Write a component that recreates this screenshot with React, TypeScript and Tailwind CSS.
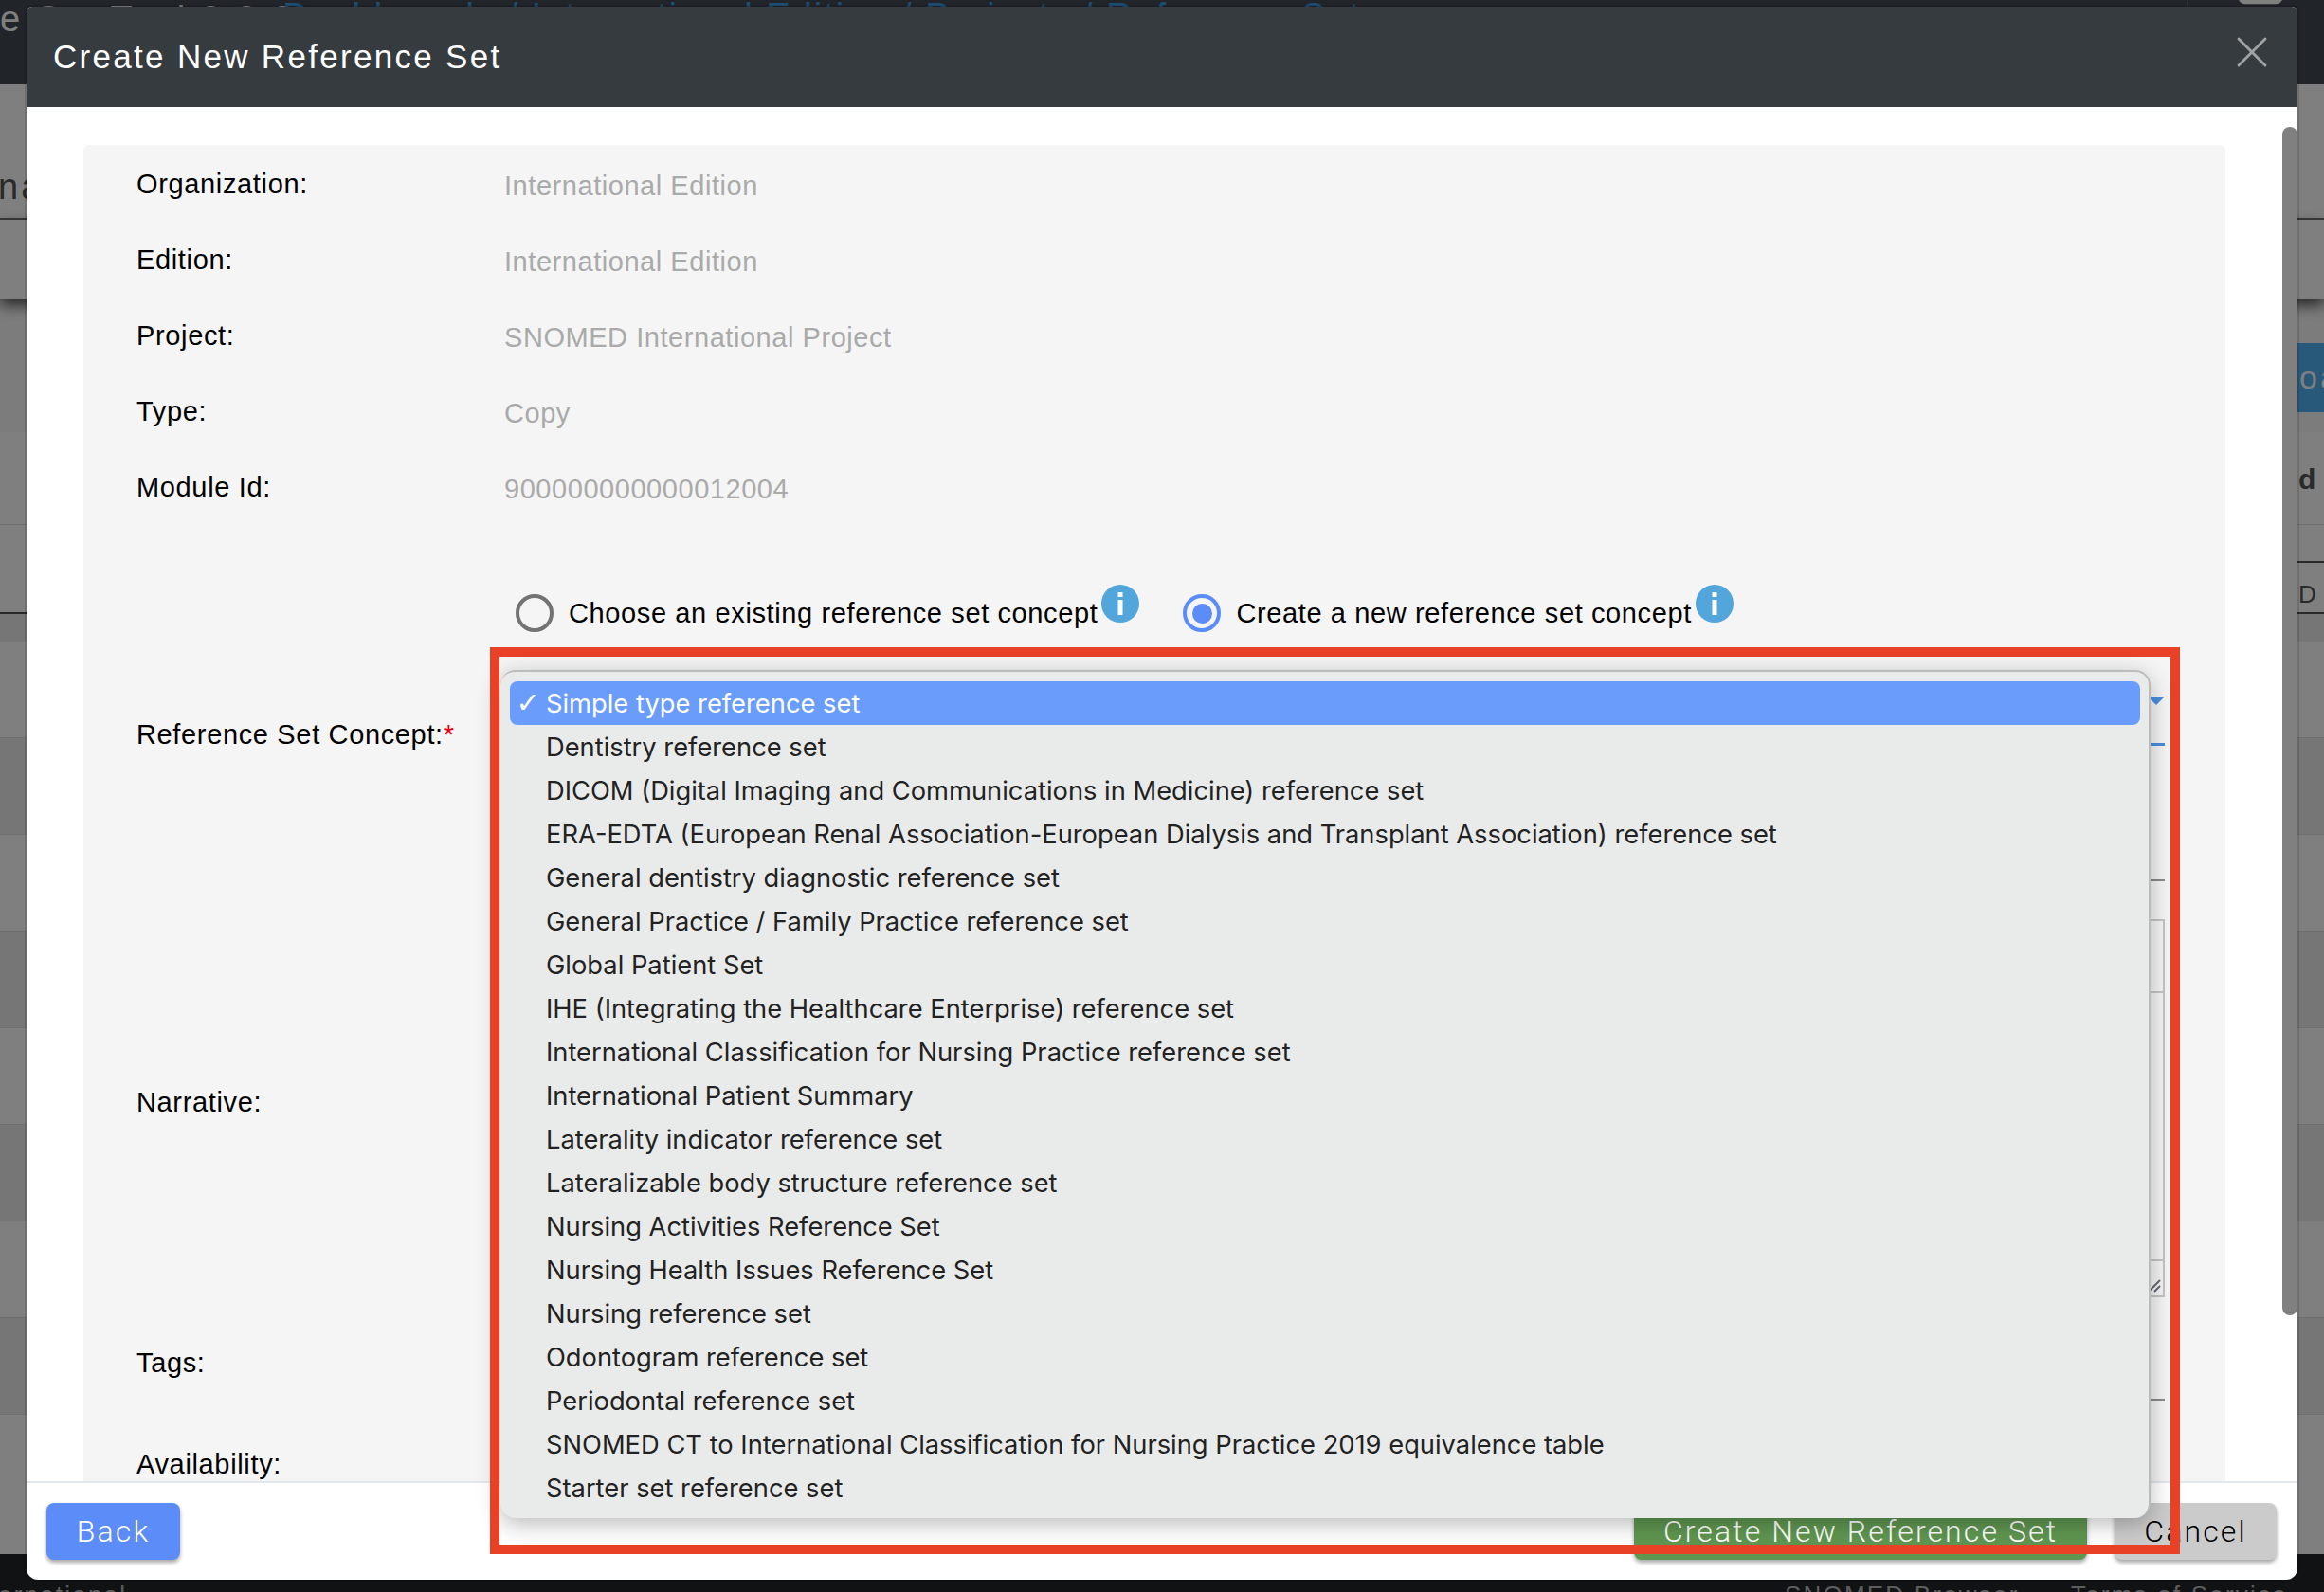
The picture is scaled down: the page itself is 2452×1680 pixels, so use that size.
import { X, SquarePen } from 'lucide-react';

const options = [
  'Simple type reference set',
  'Dentistry reference set',
  'DICOM (Digital Imaging and Communications in Medicine) reference set',
  'ERA-EDTA (European Renal Association-European Dialysis and Transplant Association) reference set',
  'General dentistry diagnostic reference set',
  'General Practice / Family Practice reference set',
  'Global Patient Set',
  'IHE (Integrating the Healthcare Enterprise) reference set',
  'International Classification for Nursing Practice reference set',
  'International Patient Summary',
  'Laterality indicator reference set',
  'Lateralizable body structure reference set',
  'Nursing Activities Reference Set',
  'Nursing Health Issues Reference Set',
  'Nursing reference set',
  'Odontogram reference set',
  'Periodontal reference set',
  'SNOMED CT to International Classification for Nursing Practice 2019 equivalence table',
  'Starter set reference set',
];

const readonlyFields = [
  ['Organization:', 'International Edition'],
  ['Edition:', 'International Edition'],
  ['Project:', 'SNOMED International Project'],
  ['Type:', 'Copy'],
  ['Module Id:', '900000000000012004'],
];

function InfoDot() {
  return (
    <span className="w-[40px] h-[40px] -mt-[20px] rounded-full bg-[#52a6dc] text-white flex items-center justify-center shrink-0">
      <svg width="8" height="24" viewBox="0 0 8 24" fill="#fff">
        <rect x="1.5" y="0" width="5" height="5" />
        <rect x="1.5" y="8" width="5" height="16" />
      </svg>
    </span>
  );
}

function BackgroundPage() {
  return (
    <div className="w-full h-full flex flex-col bg-white overflow-hidden font-['Liberation_Sans',sans-serif]">
      <div className="h-[89px] bg-[#424852] shrink-0 relative overflow-hidden">
        <div className="absolute left-0 top-[-8px] text-[38px] tracking-[3px] text-white whitespace-nowrap">e Set Tool 2.0.0</div>
        <div className="absolute left-[298px] top-[-11px] text-[38px] tracking-[2px] text-[#3c9be0] whitespace-nowrap">Dashboards / International Edition / Projects / Reference Sets</div>
        <div className="absolute left-[2307px] top-0 w-[2px] h-[89px] bg-[#5a6068]" />
        <SquarePen size={56} strokeWidth={2} className="absolute left-[2357px] top-[-47px] text-white" />
      </div>
      <div className="h-[143px] shrink-0 border-b-2 border-[#777] overflow-hidden">
        <div className="-ml-[2px] mt-[80px] text-[38px] tracking-[3px] text-[#555]">nal</div>
      </div>
      <div className="h-[84px] shrink-0 relative shadow-[0_6px_14px_rgba(0,0,0,0.7)] bg-white" />
      <div className="h-[140px] shrink-0 bg-[#f9f9f9] overflow-hidden">
        <div className="ml-[2366px] mt-[46px] w-[200px] h-[73px] bg-[#50b0f4] text-white text-[34px] tracking-[3px] leading-[73px]">Upload</div>
      </div>
      <div className="h-[98px] shrink-0 bg-white border-b border-[#ddd] overflow-hidden">
        <div className="ml-[2425px] mt-[27px] text-[30px] font-bold text-[#555] tracking-[3px] whitespace-nowrap">d I</div>
      </div>
      <div className="h-[40px] shrink-0 bg-white">
        <div className="ml-[2400px] h-full border-b-2 border-[#555]" />
      </div>
      <div className="h-[54px] shrink-0 bg-white border-b-2 border-[#555] overflow-hidden">
        <div className="ml-[2425px] mt-[14px] text-[26px] text-[#555]">D</div>
      </div>
      <div className="h-[29px] shrink-0 bg-[#ececec]" />
      {[0, 1, 2, 3, 4, 5, 6, 7].map((i) => (
        <div key={i} className={i % 2 === 0 ? 'h-[102px] shrink-0 bg-white border-b border-[#ddd]' : 'h-[102px] shrink-0 bg-[#ececec] border-b border-[#ddd]'} />
      ))}
      <div className="flex-1 bg-white" />
      <div className="h-[40px] shrink-0 bg-[#222428] relative overflow-hidden text-white/70 text-[26px] tracking-[2.2px] whitespace-nowrap">
        <span className="absolute -left-[2px] top-[24px]">ernational</span>
        <span className="absolute left-[1883px] top-[24px]">SNOMED Browser</span>
        <span className="absolute left-[2185px] top-[24px]">Terms of Service</span>
      </div>
    </div>
  );
}

function Label({ children }: { children: React.ReactNode }) {
  return <div className="w-[388px] shrink-0 text-[29px] leading-[40px] tracking-[0.65px] text-black">{children}</div>;
}

function Modal() {
  return (
    <div className="absolute left-[28px] top-[7px] w-[2396px] h-[1660px] flex flex-col bg-white rounded-t-[6px] rounded-b-[12px] overflow-hidden shadow-[0_0_0_2px_rgba(0,0,0,0.12)] font-['Liberation_Sans',sans-serif]">
      <div className="h-[106px] shrink-0 bg-[#363b3f] flex items-center justify-between pl-[28px] pr-[20px]">
        <h2 className="text-[35px] tracking-[2.3px] text-white">Create New Reference Set</h2>
        <X size={56} strokeWidth={1.25} className="text-[#a0a2a4] mb-[10px]" />
      </div>

      <div className="flex-1 min-h-0 flex overflow-hidden">
        <div className="flex-1 min-w-0 pl-[60px] pr-[60px] pt-[40px]">
          <div className="h-[1500px] bg-[#f5f5f5] rounded-t-[6px] pl-[56px] pr-[64px]">
            {readonlyFields.map(([label, value]) => (
              <div key={label} className="h-[80px] flex items-center pt-[2px]">
                <Label>{label}</Label>
                <div className="text-[29px] tracking-[0.55px] text-[#aaaaaa] pt-[5px]">{value}</div>
              </div>
            ))}

            <div className="mt-[68px] h-[52px] flex items-center">
              <div className="w-[388px] shrink-0" />
              <span className="ml-[12px] w-[40px] h-[40px] rounded-full border-[4px] border-[#737373] shrink-0" />
              <span className="ml-[16px] pt-[2px] text-[29px] tracking-[0.62px] text-black">Choose an existing reference set concept</span>
              <span className="ml-[4px]"><InfoDot /></span>
              <span className="ml-[46px] w-[40px] h-[40px] rounded-full border-[4px] border-[#5b8cf8] shrink-0 flex items-center justify-center">
                <span className="w-[21px] h-[21px] rounded-full bg-[#5b8cf8]" />
              </span>
              <span className="ml-[16px] pt-[2px] text-[29px] tracking-[0.62px] text-black">Create a new reference set concept</span>
              <span className="ml-[4px]"><InfoDot /></span>
            </div>

            <div className="h-[116px] flex">
              <div className="pt-[82px]">
                <Label>
                  Reference Set Concept:<span className="text-red-600">*</span>
                </Label>
              </div>
              <div className="flex-1 h-[114px] border-b-[3px] border-[#4a8fe0] relative">
                <span className="absolute right-0 top-[62px] border-x-[9px] border-x-transparent border-t-[9px] border-t-[#4a8fe0]" />
              </div>
            </div>

            <div className="h-[143px] flex">
              <div className="w-[388px] shrink-0" />
              <div className="flex-1 h-[141px] border-b-2 border-[#8a8a8a]" />
            </div>

            <div className="mt-[38px] h-[399px] flex">
              <div className="pt-[173px]">
                <Label>Narrative:</Label>
              </div>
              <div className="flex-1 h-full border-2 border-[#c4c4c4] flex flex-col">
                <div className="h-[76px] shrink-0 border-b-2 border-[#c4c4c4]" />
                <div className="flex-1 border-b-2 border-[#c4c4c4]" />
                <div className="h-[36px] shrink-0 flex justify-end items-end pb-[2px] pr-[1px]">
                  <svg width="16" height="16" viewBox="0 0 16 16" stroke="#5f6873" strokeWidth="2">
                    <line x1="2" y1="14" x2="14" y2="2" />
                    <line x1="8" y1="14" x2="14" y2="8" />
                  </svg>
                </div>
              </div>
            </div>

            <div className="h-[111px] flex">
              <div className="pt-[49px]">
                <Label>Tags:</Label>
              </div>
              <div className="flex-1 h-[109px] border-b-2 border-[#8a8a8a]" />
            </div>

            <div className="pt-[45px]">
              <Label>Availability:</Label>
            </div>
          </div>
        </div>
        <div className="w-[16px] shrink-0 mt-[21px] h-[1254px] rounded-full bg-[#808080]" />
      </div>

      <div className="h-[104px] shrink-0 border-t-2 border-[#e3e6ea] flex items-start pt-[21px] pl-[21px] pr-[22px] text-[32px] font-light font-['Roboto',sans-serif] tracking-[2.1px]">
        <button className="w-[141px] h-[60px] rounded-[8px] bg-[#5b8cf8] text-white shadow-[0_3px_4px_rgba(0,0,0,0.35)]">Back</button>
        <button className="ml-auto w-[478px] h-[60px] rounded-[8px] bg-[#5f9650] text-white shadow-[0_3px_4px_rgba(0,0,0,0.35)]">Create New Reference Set</button>
        <button className="ml-[29px] w-[171px] h-[60px] rounded-[8px] bg-[#cbcbcb] text-black shadow-[0_3px_4px_rgba(0,0,0,0.35)]">Cancel</button>
      </div>
    </div>
  );
}

function OptionsMenu() {
  return (
    <div className="absolute left-[528px] top-[707px] w-[1741px] h-[895px] pt-[10px] pl-[10px] pr-[9px] rounded-[16px] bg-[#e9ebea] border-t-2 border-r-2 border-[#bcbcbc] shadow-[0_6px_24px_rgba(0,0,0,0.28)] font-['Inter',sans-serif] text-[27.3px] text-[#222]">
      {options.map((option, i) => (
        <div key={option} className={i === 0 ? 'h-[46px] flex items-center rounded-[8px] bg-[#699cfb] text-white' : 'h-[46px] flex items-center'}>
          <span className="w-[38px] text-center shrink-0 font-['DejaVu_Sans',sans-serif] text-[30px] leading-none">{i === 0 ? '✓' : ''}</span>
          <span className="whitespace-nowrap pt-[2px]">{option}</span>
        </div>
      ))}
    </div>
  );
}

export default function App() {
  return (
    <div className="relative w-[2452px] h-[1680px] overflow-hidden">
      <BackgroundPage />
      <div className="absolute inset-0 bg-black/50" />
      <Modal />
      <OptionsMenu />
      <div className="absolute left-[517px] top-[683px] w-[1783px] h-[957px] border-[10px] border-[#e94125]" />
    </div>
  );
}
